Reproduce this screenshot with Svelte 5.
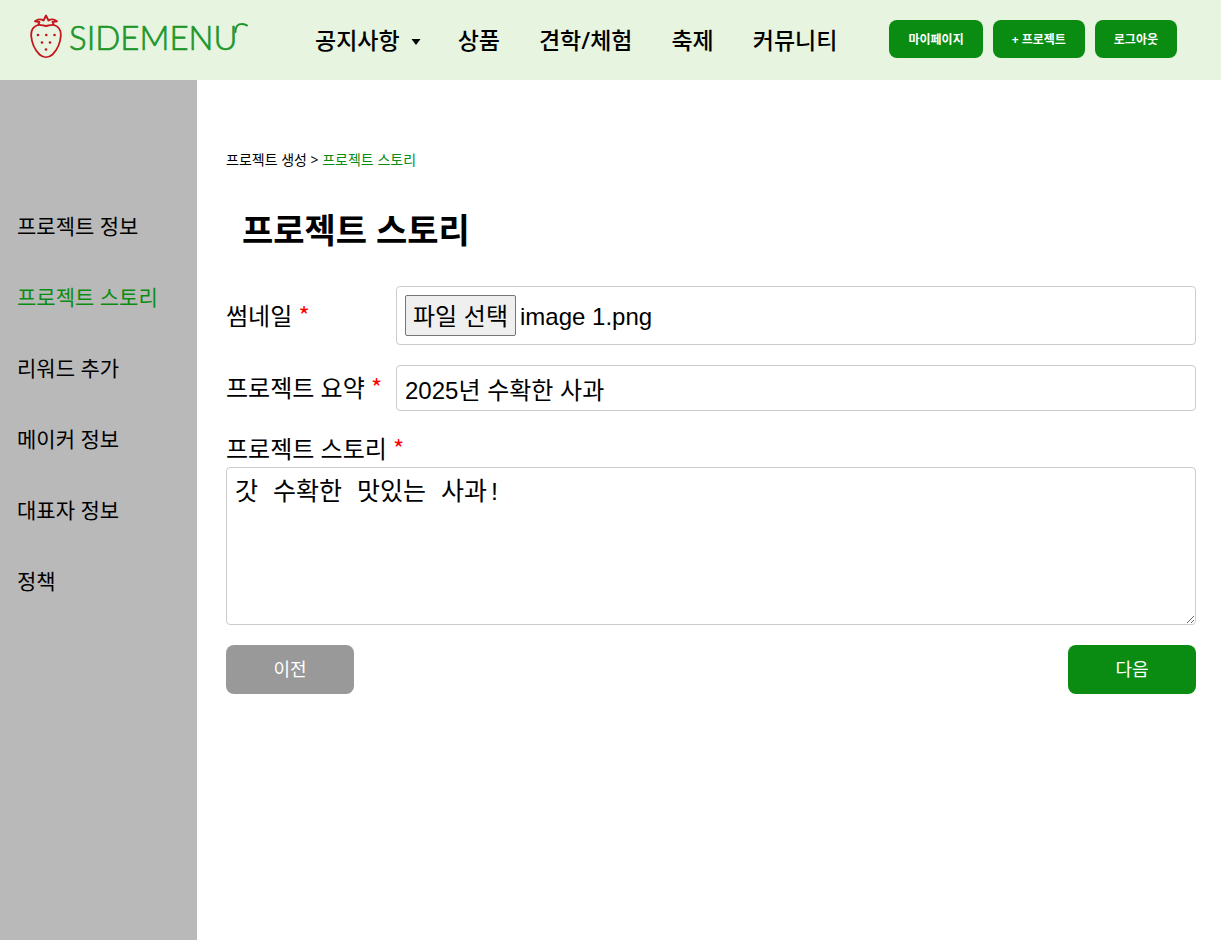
<script>
	const menus = [
		{ name: '공지사항', dropdown: true },
		{ name: '상품' },
		{ name: '견학/체험' },
		{ name: '축제' },
		{ name: '커뮤니티' }
	];

	const steps = ['프로젝트 정보', '프로젝트 스토리', '리워드 추가', '메이커 정보', '대표자 정보', '정책'];

	let current = $state('프로젝트 스토리');
	let fileName = $state('image 1.png');
	let form = $state({
		summary: '2025년 수확한 사과',
		story: '갓 수확한 맛있는 사과!'
	});

	function handleFile(event) {
		const file = event.target.files[0];
		if (file) {
			fileName = file.name;
		}
	}

	function move(offset) {
		const next = steps[steps.indexOf(current) + offset];
		if (next) {
			current = next;
		}
	}

	function handleSubmit(event) {
		event.preventDefault();
		move(1);
	}
</script>

<svelte:head>
	<title>프로젝트 스토리</title>
</svelte:head>

<div class="page">
	<header>
		<a href="#home" class="logo" aria-label="SIDEMENU">
			<svg width="220" height="48" viewBox="0 0 220 48" fill="none" stroke-linecap="round" stroke-linejoin="round">
				<g stroke="#c4161c" stroke-width="1.8">
					<path d="M8 13C3 14.500 .8 18.500 1.200 24C1.800 31.500 5.500 38.500 9.500 42.500C13.500 46 18.500 46 22.500 42.500C26.500 38.500 30.200 31.500 30.800 24C31.200 18.500 28.500 14.500 24 13C20.500 12.500 18.500 14 16 14C13.500 14 11.500 12.500 8 13Z" />
					<path d="M8.500 12L9.500 10L5 9.300C8 7 11 7 13.500 8.500L16 3.500L18.500 8.500C21 7 24 7 27 9.300L22.500 10L23.500 12" />
				</g>
				<g fill="#c4161c">
					<circle cx="8" cy="23" r="1.300" />
					<circle cx="16.300" cy="23" r="1.300" />
					<circle cx="24.500" cy="23" r="1.300" />
					<circle cx="12" cy="30.500" r="1.300" />
					<circle cx="20" cy="30.500" r="1.300" />
					<circle cx="16" cy="37.500" r="1.300" />
				</g>
				<text class="logo-text" x="39" y="38">SIDEMENU</text>
				<path d="M205.500 20C205.500 14 207.500 12 212 12C215 12 215.500 13 217 13.500" stroke="#20962a" stroke-width="2" />
			</svg>
		</a>

		<nav class="menu">
			{#each menus as menu}
				<a href="#menu">
					{menu.name}
					{#if menu.dropdown}
						<svg width="10" height="6" viewBox="0 0 10 6"><path d="M0.500 0H9.500L5 6Z" /></svg>
					{/if}
				</a>
			{/each}
		</nav>

		<div class="user-buttons">
			<button type="button">마이페이지</button>
			<button type="button">+ 프로젝트</button>
			<button type="button">로그아웃</button>
		</div>
	</header>

	<div class="body">
		<aside>
			{#each steps as step}
				<a href="#step" class:active={step === current} onclick={() => (current = step)}>{step}</a>
			{/each}
		</aside>

		<main>
			<p class="breadcrumb">프로젝트 생성 &gt; <span>프로젝트 스토리</span></p>
			<h1>프로젝트 스토리</h1>

			<form onsubmit={handleSubmit}>
				<div class="row">
					<label for="thumbnail">썸네일 <span class="required">*</span></label>
					<div class="field file">
						<input id="thumbnail" type="file" accept="image/*" onchange={handleFile} />
						<span class="file-button">파일 선택</span>
						<span>{fileName}</span>
					</div>
				</div>

				<div class="row">
					<label for="summary">프로젝트 요약 <span class="required">*</span></label>
					<input id="summary" class="field" type="text" bind:value={form.summary} />
				</div>

				<div class="story">
					<label for="story">프로젝트 스토리 <span class="required">*</span></label>
					<textarea id="story" class="field" bind:value={form.story}></textarea>
				</div>

				<div class="form-buttons">
					<button type="button" class="prev" onclick={() => move(-1)}>이전</button>
					<button type="submit">다음</button>
				</div>
			</form>
		</main>
	</div>
</div>

<style>
	:global(body) {
		margin: 0;
	}

	.page {
		display: flex;
		flex-direction: column;
		min-height: 100vh;
		font-family: "Noto Sans", "Noto Sans CJK KR", sans-serif;
		color: #000;
		background: #fff;
	}

	a {
		color: inherit;
		text-decoration: none;
	}

	button {
		border: none;
		border-radius: 8px;
		background: #0a8c12;
		color: white;
		font-family: inherit;
		cursor: pointer;
	}

	header {
		display: flex;
		align-items: center;
		box-sizing: border-box;
		height: 80px;
		padding: 0 44px 0 30px;
		background: #e7f4e0;
	}

	.logo {
		display: flex;
		margin-right: 65px;
	}

	.logo svg {
		margin-bottom: 8px;
	}

	.logo-text {
		font-family: Lato, sans-serif;
		font-size: 33px;
		font-weight: 300;
		fill: #20962a;
		stroke: #20962a;
		stroke-width: 0.7;
	}

	.menu {
		display: flex;
		gap: 39px;
		font-size: 23px;
		font-weight: 500;
		line-height: 32px;
		white-space: nowrap;
	}

	.menu svg {
		margin: 0 -2px 4px 5px;
	}

	.user-buttons {
		display: flex;
		gap: 10px;
		margin-left: auto;
		padding-bottom: 2px;
	}

	.user-buttons button {
		height: 38px;
		padding: 0 19px;
		font-size: 12px;
		font-weight: bold;
		white-space: nowrap;
	}

	.body {
		display: flex;
		flex: 1;
	}

	aside {
		display: flex;
		flex-direction: column;
		flex: 0 0 180px;
		gap: 41px;
		padding: 131px 0 40px 17px;
		background: #b9b9b9;
		font-size: 21px;
		line-height: 30px;
	}

	aside .active {
		color: #0a8c12;
	}

	main {
		flex: 1;
		min-width: 0;
		padding: 70px 25px 40px 29px;
	}

	.breadcrumb {
		margin: 0;
		font-size: 14px;
		line-height: 20px;
	}

	.breadcrumb span {
		color: #0a8c12;
	}

	h1 {
		margin: 34px 16px 30px;
		font-size: 34px;
		line-height: 52px;
	}

	.row {
		display: flex;
		align-items: center;
		margin-bottom: 20px;
	}

	label {
		font-size: 24px;
		line-height: 36px;
	}

	.row label {
		flex: 0 0 170px;
	}

	.required {
		color: red;
		font-family: "Noto Sans CJK KR", sans-serif;
		line-height: 1;
	}

	.field {
		box-sizing: border-box;
		width: 100%;
		padding: 8px;
		border: 1px solid #ccc;
		border-radius: 4px;
		background: #fff;
		color: #000;
		font-family: "Liberation Sans", "Noto Sans CJK KR", sans-serif;
		font-size: 24px;
	}

	input.field {
		height: 46px;
	}

	.file {
		position: relative;
		display: flex;
		align-items: baseline;
		gap: 4px;
		height: 59px;
	}

	/* the native input lies over the styled one and takes the clicks */
	.file input {
		position: absolute;
		inset: 0;
		width: 100%;
		opacity: 0;
		cursor: pointer;
	}

	.file-button {
		padding: 3px 7px 0;
		border: 1px solid #767676;
		border-radius: 2px;
		background: #efefef;
		line-height: 36px;
	}

	.story {
		display: flex;
		flex-direction: column;
	}

	textarea.field {
		height: 158px;
		font-family: "Liberation Mono", "Noto Sans CJK KR", monospace;
		font-size: 25px;
		line-height: 36px;
		resize: vertical;
	}

	.form-buttons {
		display: flex;
		justify-content: space-between;
		margin-top: 20px;
	}

	.form-buttons button {
		width: 128px;
		height: 49px;
		padding: 0 0 3px;
		font-size: 18px;
	}

	.form-buttons .prev {
		background: #999;
	}
</style>
